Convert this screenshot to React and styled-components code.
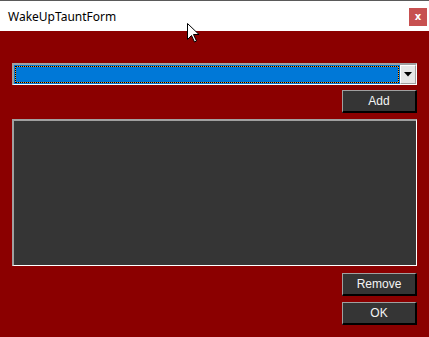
import React from 'react';
import styled, { createGlobalStyle } from 'styled-components';

const GlobalStyle = createGlobalStyle`
    html, body {
        margin: 0;
        padding: 0;
        background: #8b0000;
    }
`;

const Window = styled.div`
    position: relative;
    width: 429px;
    height: 337px;
    display: flex;
    flex-direction: column;
    background: #8b0000;
    border-top: 1px solid #5a5a5a;
    box-sizing: border-box;
    overflow: hidden;
`;

const TitleBar = styled.div`
    height: 30px;
    display: flex;
    align-items: center;
    justify-content: space-between;
    background: #ffffff;
    padding: 0 2px 0 8px;
`;

const Title = styled.span`
    font-family: "Noto Sans", "Open Sans", sans-serif;
    font-size: 12px;
    color: #000;
    margin-top: 1px;
`;

const CloseButton = styled.div`
    width: 18px;
    height: 18px;
    margin-top: 2px;
    display: flex;
    align-items: center;
    justify-content: center;
    background: #c75050;
    color: #fff;
    font-family: "DejaVu Sans", sans-serif;
    font-weight: bold;
    font-size: 10px;
    line-height: 1;
`;

const Body = styled.div`
    flex: 1;
    display: flex;
    flex-direction: column;
    padding: 32px 12px 12px 12px;
`;

const Combo = styled.div`
    height: 22px;
    display: flex;
    box-sizing: border-box;
    border-style: solid;
    border-width: 2px 1px 1px 2px;
    border-color: #a0a0a0 #ffffff #ffffff #a0a0a0;
    background: #ffffff;
`;

const ComboField = styled.div`
    flex: 1;
    padding: 1px;
    background: #0078d7;
`;

const FocusRect = styled.div`
    height: 100%;
    box-sizing: border-box;
    border: 1px dotted #000;
    background: linear-gradient(#0078d7, #0078d7) padding-box, #f59a2a border-box;
`;

const DropButton = styled.div`
    width: 16px;
    display: flex;
    align-items: center;
    justify-content: center;
    box-sizing: border-box;
    border-style: solid;
    border-width: 1px;
    border-color: #ffffff #a0a0a0 #a0a0a0 #ffffff;
    background: #e6e6e6;
`;

const ButtonRow = styled.div`
    display: flex;
    justify-content: flex-end;
    margin-top: ${(p) => p.$gap}px;
`;

const Button = styled.div`
    width: 75px;
    height: 23px;
    box-sizing: border-box;
    display: flex;
    align-items: center;
    justify-content: center;
    border-style: solid;
    border-width: 1px 2px 2px 1px;
    border-color: #a0a0a0 #000 #000 #a0a0a0;
    background: #353535;
    color: #f4f4f4;
    font-family: "Liberation Sans", Arial, sans-serif;
    font-size: 12px;
`;

const ListBox = styled.div`
    height: 147px;
    margin-top: 6px;
    box-sizing: border-box;
    border-style: solid;
    border-width: 2px 1px 1px 2px;
    border-color: #a0a0a0 #ffffff #ffffff #a0a0a0;
    background: #353535;
`;

const Cursor = styled.svg`
    position: absolute;
    left: 187px;
    top: 22px;
`;

export default function App() {
    return (
        <>
            <GlobalStyle />
            <Window>
                <TitleBar>
                    <Title>WakeUpTauntForm</Title>
                    <CloseButton>x</CloseButton>
                </TitleBar>
                <Body>
                    <Combo>
                        <ComboField>
                            <FocusRect />
                        </ComboField>
                        <DropButton>
                            <svg width="8" height="5" viewBox="0 0 8 5">
                                <path d="M0 0H8L4 4.5Z" fill="#000" />
                            </svg>
                        </DropButton>
                    </Combo>
                    <ButtonRow $gap={5}>
                        <Button>Add</Button>
                    </ButtonRow>
                    <ListBox />
                    <ButtonRow $gap={7}>
                        <Button>Remove</Button>
                    </ButtonRow>
                    <ButtonRow $gap={6}>
                        <Button>OK</Button>
                    </ButtonRow>
                </Body>
                <Cursor width="13" height="20" viewBox="0 0 13 20">
                    <path
                        d="M0.5 0.5V16.5L4.5 12.5L7.5 19L9.5 18L6.5 11.5H12Z"
                        fill="#fff"
                        stroke="#000"
                        strokeWidth="1"
                        strokeLinejoin="miter"
                    />
                </Cursor>
            </Window>
        </>
    );
}
